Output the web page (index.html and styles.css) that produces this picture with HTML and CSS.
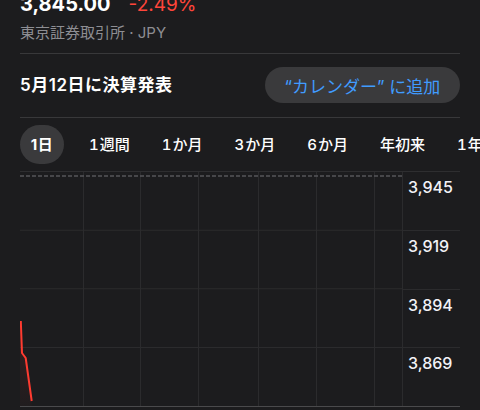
FILE: index.html
```html
<!DOCTYPE html>
<html lang="ja">
<head>
<meta charset="utf-8">
<link rel="stylesheet" href="styles.css">
</head>
<body>
<div class="page">
  <div class="quote">
    <span class="price">3,845.00</span>
    <span class="change">-2.49%</span>
  </div>
  <div class="exchange">東京証券取引所 · JPY</div>
  <div class="earnings">
    <span class="earnings-title">5月12日に決算発表</span>
    <button class="cal-btn">“カレンダー” に追加</button>
  </div>
  <div class="tabs">
    <span class="tab active">1日</span>
    <span class="tab"><span class="num">1</span>週間</span>
    <span class="tab"><span class="num">1</span>か月</span>
    <span class="tab"><span class="num">3</span>か月</span>
    <span class="tab"><span class="num">6</span>か月</span>
    <span class="tab">年初来</span>
    <span class="tab"><span class="num">1</span>年</span>
  </div>
  <div class="chart">
    <svg class="plot" width="382" height="234" viewBox="0 0 382 234">
      <defs>
        <linearGradient id="fill" x1="0" y1="0" x2="0" y2="1">
          <stop offset="0" stop-color="#ff3b30" stop-opacity="0.12"/>
          <stop offset="1" stop-color="#ff3b30" stop-opacity="0.02"/>
        </linearGradient>
      </defs>
      <g stroke="#2b2b2d" stroke-width="1">
        <line x1="0" y1="58.25" x2="382" y2="58.25"/>
        <line x1="0" y1="116.75" x2="382" y2="116.75"/>
        <line x1="0" y1="175.5" x2="382" y2="175.5"/>
        <line x1="63.5" y1="0" x2="63.5" y2="234"/>
        <line x1="120.5" y1="0" x2="120.5" y2="234"/>
        <line x1="178.5" y1="0" x2="178.5" y2="234"/>
        <line x1="238.5" y1="0" x2="238.5" y2="234"/>
        <line x1="296.5" y1="0" x2="296.5" y2="234"/>
        <line x1="354.5" y1="0" x2="354.5" y2="234"/>
      </g>
      <line x1="0" y1="4" x2="382" y2="4" stroke="#56565a" stroke-width="1.5" stroke-dasharray="4 2"/>
      <polygon points="0,149 2,181 5.7,186 11.7,229 11.7,234 0,234" fill="url(#fill)"/>
      <polyline points="0.8,149 2,181 5.7,186 11.7,229" fill="none" stroke="#ff3b30" stroke-width="2" stroke-linejoin="round"/>
    </svg>
    <div class="axis">
      <div class="axis-row">3,945</div>
      <div class="axis-row">3,919</div>
      <div class="axis-row">3,894</div>
      <div class="axis-row">3,869</div>
    </div>
  </div>
</div>
</body>
</html>
```

FILE: styles.css
```css
html, body {
  margin: 0;
  padding: 0;
  background: #1c1c1e;
  overflow: hidden;
}

body {
  width: 480px;
  height: 410px;
  font-family: "Inter", "Noto Sans CJK JP", sans-serif;
  color: #ffffff;
}

.page {
  margin-top: -8px;
  padding: 0 20px;
}

.quote {
  display: flex;
  align-items: baseline;
  height: 24px;
  line-height: 24px;
  white-space: nowrap;
}

.price {
  font-size: 20px;
  font-weight: 700;
  color: #ffffff;
}

.change {
  font-size: 19px;
  font-weight: 400;
  color: #ff453a;
  margin-left: 18px;
}

.exchange {
  margin-top: 7px;
  font-size: 15px;
  line-height: 20px;
  height: 20px;
  color: #8e8e93;
  padding-bottom: 10px;
  border-bottom: 1px solid #38383a;
}

.earnings {
  display: flex;
  align-items: center;
  justify-content: space-between;
  padding: 13px 0 14px;
  border-bottom: 1px solid #38383a;
}

.earnings-title {
  font-size: 17px;
  font-weight: 600;
  line-height: 22px;
  letter-spacing: 0.5px;
}

.cal-btn {
  width: 195px;
  height: 36px;
  border: none;
  border-radius: 18px;
  background: #3a3a3c;
  color: #409cff;
  font-family: "Inter", "Noto Sans CJK JP", sans-serif;
  font-size: 17px;
  font-weight: 400;
  padding: 0;
  white-space: nowrap;
}

.tabs {
  display: flex;
  align-items: center;
  gap: 12px;
  padding: 7px 0;
  white-space: nowrap;
  width: 440px;
}

.tab {
  flex: none;
  height: 39px;
  line-height: 39px;
  padding: 0 10px;
  font-size: 15px;
  font-weight: 500;
  color: #ffffff;
  border-radius: 20px;
}

.num {
  font-variant-numeric: tabular-nums;
  margin-right: 1px;
}

.tab.active {
  width: 44px;
  margin-right: 3px;
  padding: 0;
  text-align: center;
  background: #3a3a3c;
  font-weight: 700;
  letter-spacing: 0.5px;
}

.chart {
  display: flex;
  border-top: 1px solid #2e2e30;
  border-bottom: 1px solid #4a4a4c;
  height: 234px;
}

.plot {
  display: block;
  flex: none;
}

.axis {
  flex: 1;
  display: flex;
  flex-direction: column;
  border-left: 1px solid #2b2b2d;
}

.axis-row {
  flex: 1;
  padding: 6px 0 0 5px;
  font-size: 16px;
  font-weight: 500;
  line-height: 18px;
  color: #f2f2f7;
}

.axis-row + .axis-row {
  border-top: 1px solid #2b2b2d;
}
```
